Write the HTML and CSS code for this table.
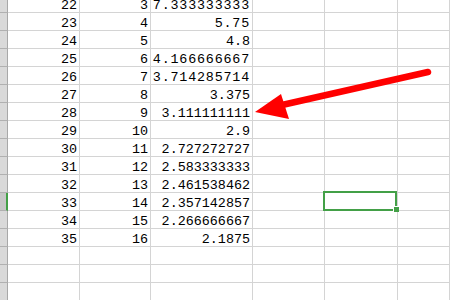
FILE: index.html
```html
<!DOCTYPE html>
<html>
<head>
<meta charset="utf-8">
<link rel="stylesheet" href="styles.css">
</head>
<body>
<div class="sheet">
  <div class="rh"></div><div class="c">22</div><div class="c">3</div><div class="c wide">7.333333333</div><div class="c"></div><div class="c"></div><div class="c"></div>
  <div class="rh"></div><div class="c">23</div><div class="c">4</div><div class="c wide">5.75</div><div class="c"></div><div class="c"></div><div class="c"></div>
  <div class="rh"></div><div class="c">24</div><div class="c">5</div><div class="c">4.8</div><div class="c"></div><div class="c"></div><div class="c"></div>
  <div class="rh"></div><div class="c">25</div><div class="c">6</div><div class="c wide">4.166666667</div><div class="c"></div><div class="c"></div><div class="c"></div>
  <div class="rh"></div><div class="c">26</div><div class="c">7</div><div class="c wide">3.714285714</div><div class="c"></div><div class="c"></div><div class="c"></div>
  <div class="rh"></div><div class="c">27</div><div class="c">8</div><div class="c">3.375</div><div class="c"></div><div class="c"></div><div class="c"></div>
  <div class="rh"></div><div class="c">28</div><div class="c">9</div><div class="c">3.111111111</div><div class="c"></div><div class="c"></div><div class="c"></div>
  <div class="rh"></div><div class="c">29</div><div class="c">10</div><div class="c">2.9</div><div class="c"></div><div class="c"></div><div class="c"></div>
  <div class="rh"></div><div class="c">30</div><div class="c">11</div><div class="c">2.727272727</div><div class="c"></div><div class="c"></div><div class="c"></div>
  <div class="rh"></div><div class="c">31</div><div class="c">12</div><div class="c">2.583333333</div><div class="c"></div><div class="c"></div><div class="c"></div>
  <div class="rh"></div><div class="c">32</div><div class="c">13</div><div class="c">2.461538462</div><div class="c"></div><div class="c"></div><div class="c"></div>
  <div class="rh active"></div><div class="c">33</div><div class="c">14</div><div class="c">2.357142857</div><div class="c"></div><div class="c selected"></div><div class="c"></div>
  <div class="rh"></div><div class="c">34</div><div class="c">15</div><div class="c">2.266666667</div><div class="c"></div><div class="c"></div><div class="c"></div>
  <div class="rh"></div><div class="c">35</div><div class="c">16</div><div class="c">2.1875</div><div class="c"></div><div class="c"></div><div class="c"></div>
  <div class="rh"></div><div class="c"></div><div class="c"></div><div class="c"></div><div class="c"></div><div class="c"></div><div class="c"></div>
  <div class="rh"></div><div class="c"></div><div class="c"></div><div class="c"></div><div class="c"></div><div class="c"></div><div class="c"></div>
  <div class="rh"></div><div class="c"></div><div class="c"></div><div class="c"></div><div class="c"></div><div class="c"></div><div class="c"></div>
</div>
<svg class="arrow" width="450" height="300" viewBox="0 0 450 300">
  <line x1="428" y1="72" x2="282" y2="105" stroke="#ff0000" stroke-width="6.5" stroke-linecap="round"/>
  <polygon points="255,112 281,94 289,119" fill="#ff0000"/>
</svg>
</body>
</html>
```

FILE: styles.css
```css
html, body {
  margin: 0;
  padding: 0;
  background: #ffffff;
  overflow: hidden;
  width: 450px;
  height: 300px;
}

.sheet {
  display: grid;
  grid-template-columns: 8px 72px 71px 102px 72px 73px 52px;
  grid-auto-rows: 18px;
  margin-top: -5px;
  font-family: "Liberation Mono", monospace;
  font-size: 13.4px;
  color: #000;
}

.c {
  box-sizing: border-box;
  border-right: 1px solid #d4d4d4;
  border-bottom: 1px solid #d4d4d4;
  text-align: right;
  padding: 2px 2px 0 0;
  line-height: 17px;
  white-space: nowrap;
}

.c.wide {
  letter-spacing: 0.8px;
}

.rh {
  box-sizing: border-box;
  background: #d9d9d9;
  border-right: 1px solid #a8a8a8;
  border-bottom: 1px solid #b0b0b0;
}

.rh.active {
  background: #c6c6c6;
  border-right: 2px solid #43a047;
}

.selected {
  position: relative;
}

.selected::before {
  content: "";
  position: absolute;
  left: -2px;
  top: -2px;
  right: 0;
  bottom: -1px;
  border: 2px solid #43a047;
}

.selected::after {
  content: "";
  position: absolute;
  right: -2px;
  bottom: -2px;
  width: 5px;
  height: 5px;
  background: #43a047;
  border-left: 1px solid #ffffff;
  border-top: 1px solid #ffffff;
}

.arrow {
  position: absolute;
  left: 0;
  top: 0;
}
```
